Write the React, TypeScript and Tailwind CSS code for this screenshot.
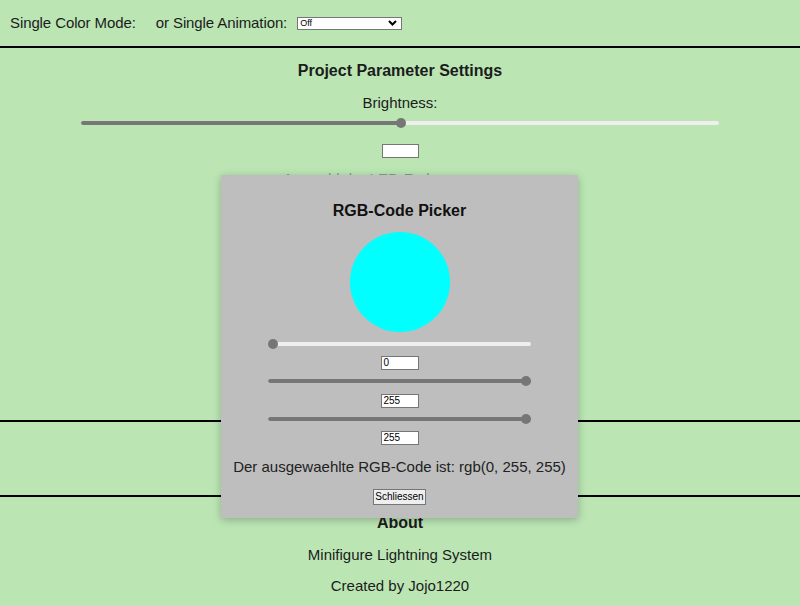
const Slider = ({ value, width }: { value: number; width: string }) => {
  const pct = (value / 255) * 100;
  return (
    <div className={`relative mx-auto h-[10px] ${width}`}>
      <div className="absolute inset-x-0 top-[3px] h-[4px] rounded-full bg-[#efefef]" />
      <div className="absolute left-0 top-[3px] h-[4px] rounded-full bg-[#767676]" style={{ width: `${pct}%` }} />
      <div
        className="absolute top-0 h-[10px] w-[10px] -translate-x-1/2 rounded-full bg-[#767676]"
        style={{ left: `calc(5px + (100% - 10px) * ${value / 255})` }}
      />
    </div>
  );
};

const NumBox = ({ value }: { value: string }) => (
  <div className="mx-auto flex h-[14px] w-[38px] items-center border border-[#767676] bg-white pl-[2px] text-[10px] leading-none text-black">
    {value}
  </div>
);

const App = () => {
  return (
    <div className="relative h-[606px] w-[800px] overflow-hidden bg-[#bbe6b4] font-['Liberation_Sans',Arial,sans-serif] text-[#1c1c1c]">
      {/* top bar */}
      <div className="flex h-[46px] items-center pl-[10px] text-[15px] tracking-[-0.1px]">
        <span>Single Color Mode:</span>
        <span className="ml-[20px]">or Single Animation:</span>
        <div className="ml-[10px] flex h-[13px] w-[105px] items-center justify-between border border-[#767676] bg-white pl-[2px] pr-[4px] text-[9px] leading-none tracking-normal text-black">
          <span>Off</span>
          <svg width="9" height="6" viewBox="0 0 9 6">
            <path d="M1 1 L4.5 4.5 L8 1" fill="none" stroke="#000" strokeWidth="2" />
          </svg>
        </div>
      </div>
      <div className="h-[2px] bg-black" />

      {/* parameter settings */}
      <div className="flex h-[372px] flex-col items-center">
        <h2 className="mt-[13px] text-[16px] font-bold leading-[20px]">Project Parameter Settings</h2>
        <p className="mt-[13px] text-[15px] leading-[18px]">Brightness:</p>
        <div className="mt-[6px] w-full">
          <Slider value={128} width="w-[638px]" />
        </div>
        <div className="mt-[16px] h-[14px] w-[37px] border border-[#767676] bg-white" />
        <p className="mt-[12px] ml-[-70px] text-[15px] leading-[18px] text-[#8a9a88]">Auswahl der LED-Farbe:</p>
      </div>
      <div className="h-[2px] bg-black" />
      <div className="h-[73px]" />
      <div className="h-[2px] bg-black" />

      {/* about */}
      <div className="flex flex-col items-center">
        <h3 className="mt-[16px] text-[16px] font-bold leading-[20px]">About</h3>
        <p className="mt-[13px] text-[15px] leading-[18px]">Minifigure Lightning System</p>
        <p className="mt-[13px] text-[15px] leading-[18px]">Created by Jojo1220</p>
      </div>

      {/* modal */}
      <div className="absolute left-[221px] top-[175px] flex h-[343px] w-[357px] flex-col items-center bg-[#bebebe] shadow-[0_2px_8px_rgba(0,0,0,0.25)]">
        <h2 className="mt-[26px] text-[16px] font-bold leading-[20px] text-[#111]">RGB-Code Picker</h2>
        <div className="mt-[11px] h-[100px] w-[100px] rounded-full bg-[#00ffff]" />
        <div className="mt-[7px] w-full">
          <Slider value={0} width="w-[263px]" />
        </div>
        <div className="mt-[7px]"><NumBox value="0" /></div>
        <div className="mt-[6px] w-full">
          <Slider value={255} width="w-[263px]" />
        </div>
        <div className="mt-[8px]"><NumBox value="255" /></div>
        <div className="mt-[6px] w-full">
          <Slider value={255} width="w-[263px]" />
        </div>
        <div className="mt-[7px]"><NumBox value="255" /></div>
        <p className="mt-[13px] text-[15px] leading-[18px] text-[#222]">Der ausgewaehlte RGB-Code ist: rgb(0, 255, 255)</p>
        <button className="mt-[13px] h-[16px] w-[53px] border border-[#767676] bg-[#efefef] text-[10px] leading-none text-black">
          Schliessen
        </button>
      </div>
    </div>
  );
};

export default App;
